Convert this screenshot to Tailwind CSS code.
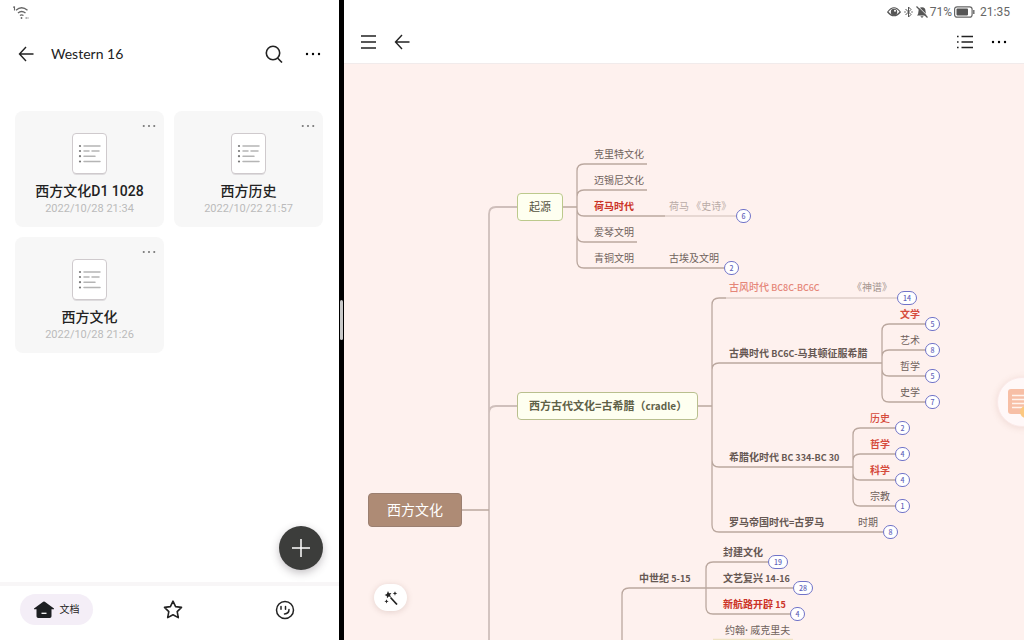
<!DOCTYPE html>
<html lang="zh-CN">
<head>
<meta charset="utf-8">
<meta name="viewport" content="width=device-width, initial-scale=1">
<title>西方文化</title>
<script src="https://cdn.jsdelivr.net/npm/@tailwindcss/browser@4"></script>
</head>
<body class="bg-black font-['Roboto','Noto_Sans_CJK_SC',sans-serif] text-[#222]">
<svg class="hidden" aria-hidden="true">
  <symbol id="doc" viewBox="0 0 35 42">
    <rect x="1" y="2" width="33" height="40" rx="3.5" fill="#dedcde"/>
    <rect x=".5" y=".5" width="34" height="40" rx="3.5" fill="#fff" stroke="#cfcacd"/>
    <g fill="#777"><circle cx="8" cy="13" r="1.1"/><circle cx="8" cy="18" r="1.1"/><circle cx="8" cy="23.200" r="1.1"/><circle cx="8" cy="28.500" r="1.1"/></g>
    <path d="M12 13h16M12 18h5M20 18h7M12 23.200h11M12 28.500h16" stroke="#b5b5b5" stroke-width="1.500" stroke-linecap="round"/>
  </symbol>
  <symbol id="dots" viewBox="0 0 16 4"><circle cx="2" cy="2" r="1.200"/><circle cx="8" cy="2" r="1.200"/><circle cx="14" cy="2" r="1.200"/></symbol>
  <symbol id="back" viewBox="0 0 16 16"><path d="M15.500 8H1.500M8 1 1.500 8 8 15" fill="none" stroke="currentColor" stroke-width="1.400"/></symbol>
</svg>
<div class="grid h-screen grid-cols-[339fr_5px_680fr] overflow-hidden">

  <section class="relative flex min-w-0 flex-col bg-white">
    <div class="flex h-6 shrink-0 items-center pl-3">
      <svg class="size-[18px]" viewBox="0 0 18 18" fill="none" stroke="#666" aria-label="Wi-Fi"><path d="M4 7.200Q9.500 2.400 15.500 7.200M6 10Q9.500 6.800 13.500 10M8 12.500Q9.500 11.200 11.500 12.500" stroke-width="1.400"/><circle cx="9.500" cy="15" r=".9" fill="#666" stroke="none"/><path d="M2.500 3.500v4M1.300 4.500l1.200-1M13.500 15h1.500M15.500 15h1" stroke-width="1.100"/></svg>
    </div>
    <header class="flex h-[60px] shrink-0 items-center px-[18px]">
      <button aria-label="返回"><svg class="size-4"><use href="#back"/></svg></button>
      <h1 class="ml-[17px] flex-1 font-['Lato'] text-sm">Western 16</h1>
      <button aria-label="搜索"><svg class="size-[18px]" viewBox="0 0 18 18" fill="none" stroke="#222" stroke-width="1.600"><circle cx="8" cy="8" r="6.700"/><path d="m12.500 13 4.500 4.500"/></svg></button>
      <button class="ml-[22px]" aria-label="更多"><svg class="size-4"><use href="#dots"/></svg></button>
    </header>
    <main class="grid grid-cols-2 gap-[10px] pt-[27px] pr-4 pl-[15px]">
      <article class="relative flex flex-col items-center rounded-lg bg-[#f7f7f7] pt-[22px] pb-[10px]">
        <button class="absolute top-[13px] right-2 text-[#777]" aria-label="更多操作"><svg class="h-1 w-[14px]" fill="currentColor"><use href="#dots"/></svg></button>
        <svg class="h-[42px] w-[35px]"><use href="#doc"/></svg>
        <h2 class="mt-[6px] text-[14px] leading-5 font-medium">西方文化D1 1028</h2>
        <time class="text-[11px] leading-4 text-[#bbb]">2022/10/28 21:34</time>
      </article>
      <article class="relative flex flex-col items-center rounded-lg bg-[#f7f7f7] pt-[22px] pb-[10px]">
        <button class="absolute top-[13px] right-2 text-[#777]" aria-label="更多操作"><svg class="h-1 w-[14px]" fill="currentColor"><use href="#dots"/></svg></button>
        <svg class="h-[42px] w-[35px]"><use href="#doc"/></svg>
        <h2 class="mt-[6px] text-[14px] leading-5 font-medium">西方历史</h2>
        <time class="text-[11px] leading-4 text-[#bbb]">2022/10/22 21:57</time>
      </article>
      <article class="relative flex flex-col items-center rounded-lg bg-[#f7f7f7] pt-[22px] pb-[10px]">
        <button class="absolute top-[13px] right-2 text-[#777]" aria-label="更多操作"><svg class="h-1 w-[14px]" fill="currentColor"><use href="#dots"/></svg></button>
        <svg class="h-[42px] w-[35px]"><use href="#doc"/></svg>
        <h2 class="mt-[6px] text-[14px] leading-5 font-medium">西方文化</h2>
        <time class="text-[11px] leading-4 text-[#bbb]">2022/10/28 21:26</time>
      </article>
    </main>
    <button class="absolute right-4 bottom-[70px] flex size-11 items-center justify-center rounded-full bg-[#3c3d3b] shadow-[0_3px_9px_rgba(60,50,60,0.3)]" aria-label="新建"><svg class="size-[18px]" viewBox="0 0 18 18" stroke="#fff" stroke-width="1.500"><path d="M9 0v18M0 9h18"/></svg></button>
    <nav class="mt-auto flex h-[58px] shrink-0 items-start border-t-4 border-[#f8f6f7] pt-2 pr-11 pl-5">
      <a href="#docs" class="flex h-[31px] w-[73px] shrink-0 items-center justify-center gap-[6px] rounded-full bg-[#f4eef7] text-[10px]">
        <svg class="size-5" viewBox="0 0 20 20"><path d="M9.200 1.800q.8-.6 1.600 0L20 8.600q.3.700-.6.700H17.500v7q0 1.700-1.700 1.700H4.200q-1.700 0-1.700-1.700v-7H.6Q-.3 9.300 0 8.600Z" fill="#1d1f22"/><path d="M7.500 13.300h5" stroke="#fff" stroke-width="1.300"/></svg>文档</a>
      <div class="flex h-[31px] flex-1 items-center justify-between pl-[70px]">
        <a href="#star" aria-label="收藏"><svg class="size-5" viewBox="0 0 20 20" fill="none" stroke="#222" stroke-width="1.600" stroke-linejoin="round"><path d="m10 1.200 2.600 5.400 5.900.8-4.300 4.200 1.100 6-5.300-2.900-5.300 2.900 1.100-6-4.300-4.200 5.900-.8Z"/></svg></a>
        <a href="#me" aria-label="我的"><svg class="size-5" viewBox="0 0 20 20" fill="none" stroke="#222" stroke-width="1.500" stroke-linecap="round"><circle cx="10" cy="10" r="8.500"/><path d="M6 6.500v2.800M10.500 6.500v2.800M14 9.500q0 4-4.500 4.500" /></svg></a>
      </div>
    </nav>
  </section>

  <div class="flex items-center justify-center bg-black" role="separator"><span class="h-10 w-[3px] rounded-full bg-[#c9c9c9]"></span></div>

  <section class="flex min-w-0 flex-col bg-white">
    <div class="flex h-6 shrink-0 items-center justify-end pr-[14px] text-xs text-[#666]">
      <svg class="h-3 w-[14px]" viewBox="0 0 14 12"><path d="M.7 6Q7-2.500 13.300 6 7 13.500.7 6Z" fill="none" stroke="#555" stroke-width="1.200"/><circle cx="7" cy="6" r="3.200" fill="#555"/><circle cx="8" cy="4.800" r="1" fill="#fff"/></svg>
      <svg class="ml-[2px] h-3 w-[11px]" viewBox="0 0 11 12" fill="none" stroke="#555"><path d="m2.500 3 5.500 5.500L5.500 11V1L8 3.500 2.500 9"/><path d="M1.500 6h1M8.500 6h1" stroke-width="1.400"/></svg>
      <svg class="ml-[2px] size-3" viewBox="0 0 12 12"><path d="M1 9.500Q2.500 8 2.500 5 2.500 1.200 6 1.200T9.500 5q0 3 1.500 4.500ZM4.300 10.200h3.400L6 12Z" fill="#555"/><path d="m1.300-.3 11 11" stroke="#fff" stroke-width="1"/><path d="m.5.500 11 11" stroke="#555" stroke-width="1.200"/></svg>
      <span class="ml-[2px]">71%</span>
      <svg class="ml-[2px] h-3 w-[21px]" viewBox="0 0 21 12"><rect x=".6" y=".8" width="17.500" height="10.400" rx="2.500" fill="none" stroke="#666" stroke-width="1.200"/><rect x="2.500" y="2.600" width="11.500" height="6.800" rx=".8" fill="#555"/><path d="M19.800 4v4" stroke="#666" stroke-width="1.400"/></svg>
      <time class="ml-[5px]">21:35</time>
    </div>
    <header class="flex h-10 shrink-0 items-center border-b border-[#f1ebeb] pr-[17px] pb-1 pl-4">
      <button aria-label="菜单"><svg class="size-4" viewBox="0 0 16 16" stroke="#222" stroke-width="1.400"><path d="M1 2h15M1 8h15M1 14h15"/></svg></button>
      <button class="ml-[18px] flex-none" aria-label="返回"><svg class="size-4"><use href="#back"/></svg></button>
      <button class="ml-auto" aria-label="大纲"><svg class="size-4" viewBox="0 0 16 16" stroke="#222" stroke-width="1.400"><path d="M4.500 2.500H16M4.500 8H16M4.500 13.500H16M0 2.500h1.600M0 8h1.600M0 13.500h1.600"/></svg></button>
      <button class="ml-[18px]" aria-label="更多"><svg class="size-4"><use href="#dots"/></svg></button>
    </header>

    <!-- Mind map canvas: nodes sit at free positions -->
    <div class="relative flex-1 overflow-hidden bg-[#fef1ee] font-['Noto_Sans_CJK_SC',sans-serif] text-[10px] leading-4 whitespace-nowrap text-[#6f615c]">
      <svg class="absolute top-0 left-0 h-[576px] w-[680px]" viewBox="344 64 680 576" fill="none" stroke="#bba89f" stroke-width="1.300" aria-hidden="true">
        <path d="M489 640V214Q489 207 496 207H517M489 413Q489 406 496 406H517" stroke="#cfbfbb" stroke-width="1.800"/>
        <path d="M461 510H489M562 207H577M697 406H712"/>
        <path d="M647 164H584Q577 164 577 171V261Q577 268 584 268H724M577 197Q577 190 584 190H647M577 209Q577 216 584 216H665M577 235Q577 242 584 242H637"/>
        <path d="M665 216H736M726 298H898" stroke="#dfd0ca"/>
        <path d="M726 298H719Q712 298 712 305V525Q712 532 719 532H883M712 370Q712 363 719 363H882M712 460Q712 467 719 467H853"/>
        <path d="M926 324H889Q882 324 882 331V395Q882 402 889 402H926M882 357Q882 350 889 350H926M882 369Q882 376 889 376H926"/>
        <path d="M896 428H860Q853 428 853 435V499Q853 506 860 506H896M853 461Q853 454 860 454H896M853 473Q853 480 860 480H896"/>
        <path d="M622 640V595Q622 588 629 588H793M769 562H713Q706 562 706 569V607Q706 614 713 614H791"/>
        <path d="M713 639.500H793" stroke="#efe3c4"/>
      </svg>

      <div class="absolute top-[429px] left-[24px] flex h-[34px] w-[94px] items-center justify-center rounded border border-[#9b7f70] bg-[#ae8b75] pb-[3px] text-[14px] text-white">西方文化</div>
      <div class="absolute top-[129px] left-[173px] flex h-[28px] w-[46px] items-center justify-center rounded border border-[#bcc98c] bg-[#fefff0] pb-[2px] text-[11px] text-[#55533f]">起源</div>
      <div class="absolute top-[328px] left-[173px] flex h-[28px] w-[181px] items-center rounded border border-[#b9bf8e] bg-[#fefff0] pb-[2px] pl-[11px] text-[11px] font-bold text-[#5f6148]"><p>西方古代文化=古希腊（<span class="text-[10px]">cradle</span>）</p></div>

      <span class="absolute top-[82px] left-[250px]">克里特文化</span>
      <span class="absolute top-[108px] left-[250px]">迈锡尼文化</span>
      <span class="absolute top-[134px] left-[250px] font-bold text-[#cb3327]">荷马时代</span>
      <span class="absolute top-[134px] left-[325px] text-[#b9aba6]">荷马 《史诗》</span>
      <span class="absolute top-[160px] left-[250px]">爱琴文明</span>
      <span class="absolute top-[186px] left-[250px]">青铜文明</span>
      <span class="absolute top-[186px] left-[325px]">古埃及文明</span>

      <span class="absolute top-[215px] left-[385px] font-medium text-[#e58578]">古风时代 <span class="text-[9px]">BC8C-BC6C</span></span>
      <span class="absolute top-[215px] left-[508px] text-[#a4958f]">《神谱》</span>
      <span class="absolute top-[281px] left-[385px] font-bold text-[#665853]">古典时代 <span class="text-[9px]">BC6C-</span>马其顿征服希腊</span>
      <span class="absolute top-[385px] left-[385px] font-bold text-[#665853]">希腊化时代 <span class="text-[9px]">BC 334-BC 30</span></span>
      <span class="absolute top-[450px] left-[385px] font-bold text-[#665853]">罗马帝国时代<span class="text-[9px]">=</span>古罗马</span>
      <span class="absolute top-[450px] left-[514px]">时期</span>

      <span class="absolute top-[242px] left-[556px] font-bold text-[#d54a3b]">文学</span>
      <span class="absolute top-[268px] left-[556px]">艺术</span>
      <span class="absolute top-[294px] left-[556px]">哲学</span>
      <span class="absolute top-[320px] left-[556px]">史学</span>
      <span class="absolute top-[346px] left-[526px] font-medium text-[#d54a3b]">历史</span>
      <span class="absolute top-[372px] left-[526px] font-bold text-[#d54a3b]">哲学</span>
      <span class="absolute top-[398px] left-[526px] font-bold text-[#d54a3b]">科学</span>
      <span class="absolute top-[424px] left-[526px]">宗教</span>

      <span class="absolute top-[506px] left-[295px] font-bold text-[#665853]">中世纪 <span class="text-[9px]">5-15</span></span>
      <span class="absolute top-[480px] left-[379px] font-bold text-[#665853]">封建文化</span>
      <span class="absolute top-[506px] left-[379px] font-bold text-[#665853]">文艺复兴 <span class="text-[9px]">14-16</span></span>
      <span class="absolute top-[532px] left-[379px] font-bold text-[#cb3327]">新航路开辟 <span class="text-[9px]">15</span></span>
      <span class="absolute top-[558px] left-[381px]">约翰<span class="font-['Roboto'] font-bold">·</span> 威克里夫</span>

      <div class="text-[7px] leading-3 font-medium text-[#6264ba]">
        <button class="absolute top-[145px] left-[392px] h-[14px] w-[15px] rounded-full border border-[#7073c8] bg-white">6</button>
        <button class="absolute top-[197px] left-[380px] h-[14px] w-[15px] rounded-full border border-[#7073c8] bg-white">2</button>
        <button class="absolute top-[227px] left-[553px] h-[14px] w-[20px] rounded-full border border-[#7073c8] bg-white">14</button>
        <button class="absolute top-[253px] left-[581px] h-[14px] w-[15px] rounded-full border border-[#7073c8] bg-white">5</button>
        <button class="absolute top-[279px] left-[581px] h-[14px] w-[15px] rounded-full border border-[#7073c8] bg-white">8</button>
        <button class="absolute top-[305px] left-[581px] h-[14px] w-[15px] rounded-full border border-[#7073c8] bg-white">5</button>
        <button class="absolute top-[331px] left-[581px] h-[14px] w-[15px] rounded-full border border-[#7073c8] bg-white">7</button>
        <button class="absolute top-[357px] left-[551px] h-[14px] w-[15px] rounded-full border border-[#7073c8] bg-white">2</button>
        <button class="absolute top-[383px] left-[551px] h-[14px] w-[15px] rounded-full border border-[#7073c8] bg-white">4</button>
        <button class="absolute top-[409px] left-[551px] h-[14px] w-[15px] rounded-full border border-[#7073c8] bg-white">4</button>
        <button class="absolute top-[435px] left-[551px] h-[14px] w-[15px] rounded-full border border-[#7073c8] bg-white">1</button>
        <button class="absolute top-[461px] left-[539px] h-[14px] w-[15px] rounded-full border border-[#7073c8] bg-white">8</button>
        <button class="absolute top-[491px] left-[424px] h-[14px] w-[20px] rounded-full border border-[#7073c8] bg-white">19</button>
        <button class="absolute top-[517px] left-[449px] h-[14px] w-[20px] rounded-full border border-[#7073c8] bg-white">28</button>
        <button class="absolute top-[543px] left-[446px] h-[14px] w-[15px] rounded-full border border-[#7073c8] bg-white">4</button>
      </div>

      <button class="absolute bottom-[29px] left-[30px] flex h-[27px] w-[33px] items-center justify-center rounded-full bg-white shadow-[0_1px_6px_rgba(120,80,70,0.2)]" aria-label="美化"><svg class="size-[14px]" viewBox="0 0 14 14" fill="#222"><path d="m4 0 1 2.200 2.400-.3L6 3.900l1 2.200-2.300-.5L3 7.300 2.800 4.900.6 3.900l2.200-1ZM11 .2l.6 1.600 1.700.7-1.700.6-.6 1.700-.7-1.700-1.600-.6 1.600-.7ZM2.500 8.300l.6 1.400 1.500.6-1.500.6-.6 1.500-.6-1.500L.4 10.300l1.500-.6Z"/><path d="m6.500 6.500 6.500 7" stroke="#222" stroke-width="1.700"/></svg></button>

      <button class="absolute top-[313px] -right-[23px] flex size-[50px] items-center rounded-full border border-[#fbe9e8] bg-[#fff8f8] pl-[10px] shadow-[0_1px_7px_rgba(160,100,80,0.16)]" aria-label="笔记"><svg class="h-8 w-[28px]" viewBox="0 0 28 32"><rect x="0" y="3" width="24" height="25" rx="3" fill="#f7bfa6"/><path d="M4 9.500h12M4 13.500h12M4 17.500h12M4 21.500h12" stroke="#fff4ee" stroke-width="1.500"/><circle cx="18" cy="26" r="6" fill="#fcc880"/></svg></button>
    </div>
  </section>
</div>
</body>
</html>
